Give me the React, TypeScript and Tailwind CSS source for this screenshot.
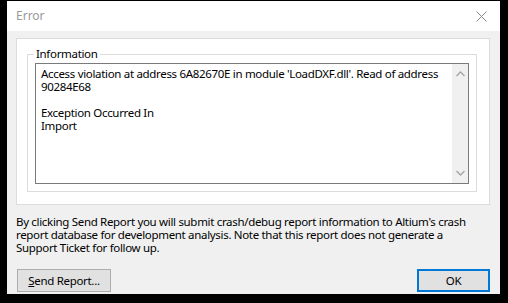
import React from "react";

const font = { fontFamily: '"Noto Sans", "Open Sans", sans-serif' };

export default function App() {
  return (
    <div className="w-[508px] h-[303px] bg-black overflow-hidden" style={font}>
      <div className="ml-[7px] mt-[1px] w-[493px] h-[293px] bg-[#f0f0f0] flex flex-col">
        {/* Title bar */}
        <div className="h-[30px] bg-white flex items-center justify-between pl-[9px] pr-[10px]">
          <span className="text-[12px] text-[#999999] leading-none">Error</span>
          <svg width="11" height="11" viewBox="0 0 11 11" className="mr-[3px]">
            <path d="M0.5 0.5 L10.5 10.5 M10.5 0.5 L0.5 10.5" stroke="#8a8a8a" strokeWidth="1" />
          </svg>
        </div>
        {/* Content */}
        <div className="flex flex-col pl-[9px] pr-[10px] pt-[7px] text-[11.5px] tracking-[-0.32px]">
          <div className="h-[167px] bg-white border border-[#dcdcdc] pl-[10px] pr-[12px] pt-[15px]">
            <div className="relative h-[138px] border border-[#dcdcdc] px-[7px] pt-[8px]">
              <span className="absolute left-[6px] top-[-8px] bg-white px-[2px] leading-[14px] text-black">
                Information
              </span>
              <div className="h-[121px] border border-[#7a7a7a] flex">
                <div className="flex-1 pl-[5px] pt-[3px] leading-[13px] text-black whitespace-nowrap">
                  <div>Access violation at address 6A82670E in module 'LoadDXF.dll'. Read of address</div>
                  <div>90284E68</div>
                  <div className="h-[13px]"></div>
                  <div>Exception Occurred In</div>
                  <div>Import</div>
                </div>
                <div className="w-[16px] bg-[#f0f0f0] flex flex-col justify-between items-center py-[7px]">
                  <svg width="9" height="6" viewBox="0 0 9 6">
                    <path d="M0.5 5 L4.5 1 L8.5 5" stroke="#a6a6a6" strokeWidth="1.4" fill="none" />
                  </svg>
                  <svg width="9" height="6" viewBox="0 0 9 6">
                    <path d="M0.5 1 L4.5 5 L8.5 1" stroke="#a6a6a6" strokeWidth="1.4" fill="none" />
                  </svg>
                </div>
              </div>
            </div>
          </div>
          <div className="pt-[10px] leading-[13px] text-black whitespace-nowrap">
            <div>By clicking Send Report you will submit crash/debug report information to Altium's crash</div>
            <div>report database for development analysis. Note that this report does not generate a</div>
            <div>Support Ticket for follow up.</div>
          </div>
          <div className="flex justify-between mt-[15px] pl-[1px]">
            <div className="w-[94px] h-[23px] bg-[#e1e1e1] border border-[#adadad] flex items-center justify-center text-black">
              <span><span className="underline">S</span>end Report...</span>
            </div>
            <div className="w-[73px] h-[23px] bg-[#e1e1e1] border-2 border-[#0078d7] flex items-center justify-center text-black">
              OK
            </div>
          </div>
        </div>
      </div>
    </div>
  );
}
